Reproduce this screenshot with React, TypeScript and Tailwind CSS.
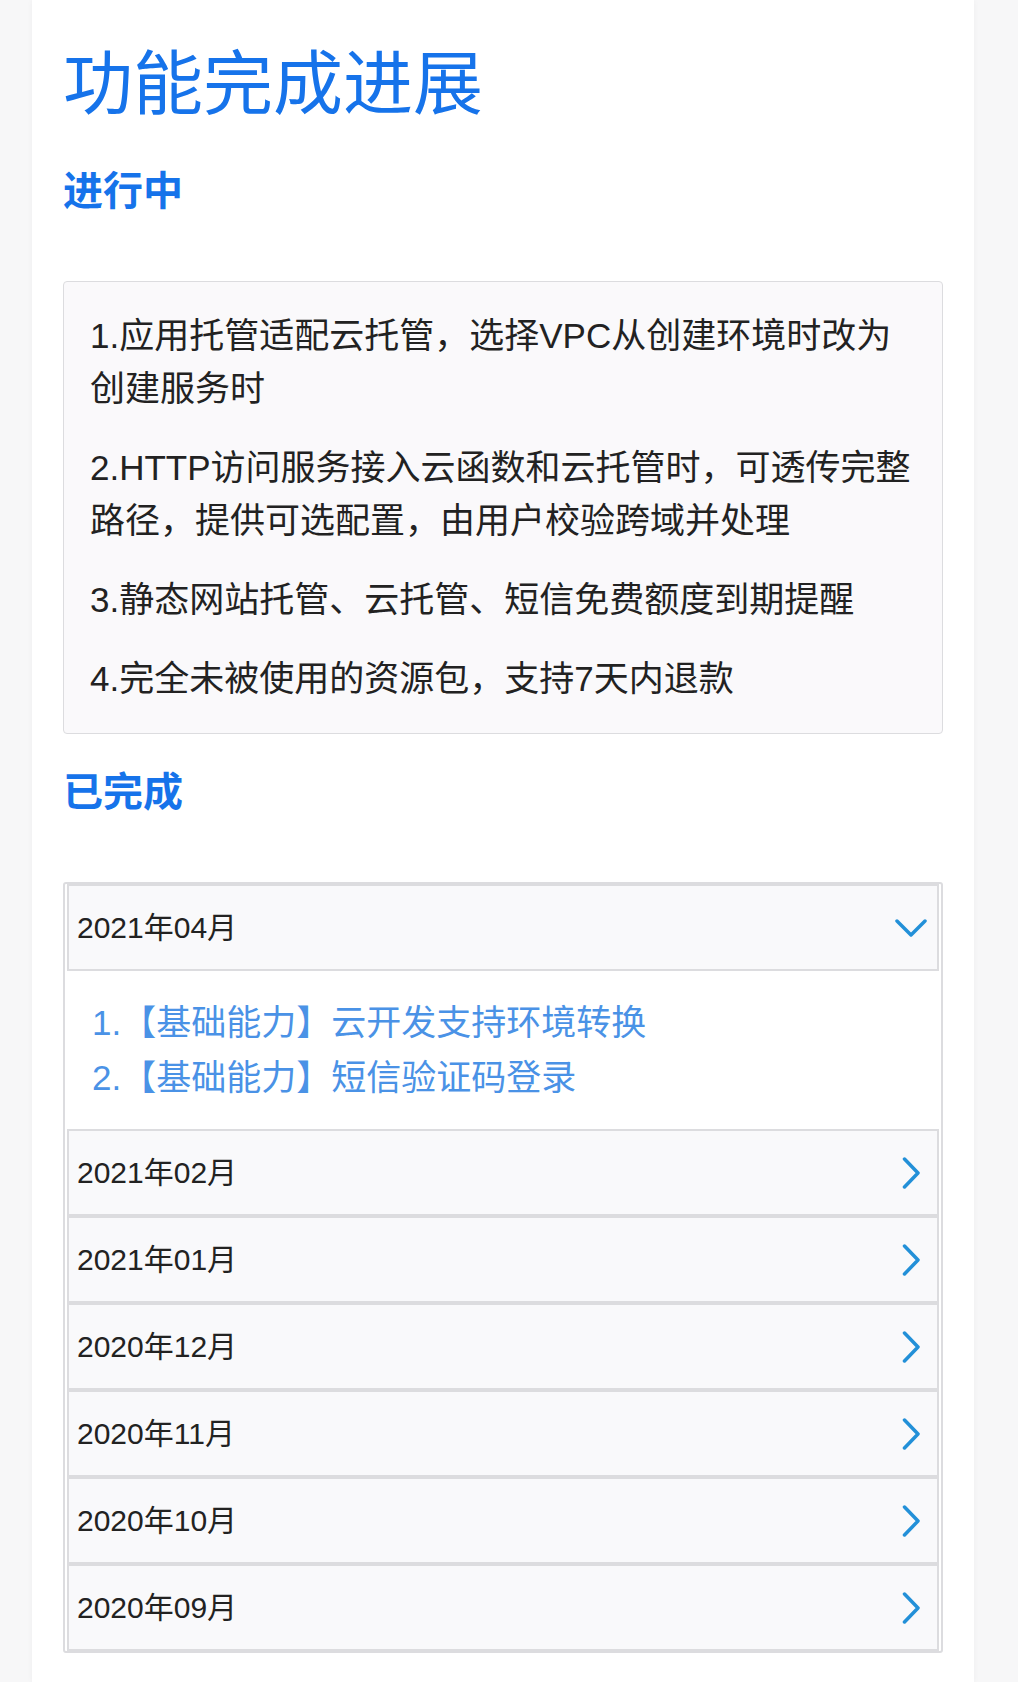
import { useState } from 'react'

const ongoing = [
  '1.应用托管适配云托管，选择VPC从创建环境时改为创建服务时',
  '2.HTTP访问服务接入云函数和云托管时，可透传完整路径，提供可选配置，由用户校验跨域并处理',
  '3.静态网站托管、云托管、短信免费额度到期提醒',
  '4.完全未被使用的资源包，支持7天内退款',
]

const months = [
  { label: '2021年04月', items: ['【基础能力】云开发支持环境转换', '【基础能力】短信验证码登录'] },
  { label: '2021年02月', items: [] },
  { label: '2021年01月', items: [] },
  { label: '2020年12月', items: [] },
  { label: '2020年11月', items: [] },
  { label: '2020年10月', items: [] },
  { label: '2020年09月', items: [] },
]

function Chevron({ open }: { open: boolean }) {
  return (
    <svg width="32" height="32" viewBox="0 0 32 32" fill="none" stroke="#2390d8" strokeWidth="3.5" strokeLinecap="round" strokeLinejoin="round">
      {open ? <path d="M2 9 L16 23 L30 9" /> : <path d="M9.5 2 L23 16 L9.5 30" />}
    </svg>
  )
}

export default function App() {
  const [open, setOpen] = useState(0)

  return (
    <div
      className="flex min-h-[1682px] bg-[#f7f7f8] pl-[32px] pr-[44px]"
      style={{ fontFamily: '"Liberation Sans", "Noto Sans CJK SC", sans-serif' }}
    >
      <main className="flex-1 bg-white px-[31px] pt-[43px] pb-[30px] shadow-[0_0_6px_rgba(0,0,0,0.04)]">
        <h1 className="text-[70px] leading-[84px] font-normal text-[#1673ea]">功能完成进展</h1>

        <h2 className="mt-[40px] text-[40px] leading-[48px] font-bold text-[#1673ea]">进行中</h2>

        <div className="mt-[66px] rounded-[4px] border border-[#dcdcdf] bg-[#faf9fb] px-[26px] pt-[27px] pb-[28px] text-[35px] leading-[53px] text-[#222]">
          <div className="flex flex-col gap-[26px]">
            {ongoing.map((t) => (
              <p key={t}>{t}</p>
            ))}
          </div>
        </div>

        <h2 className="mt-[34px] text-[40px] leading-[48px] font-bold text-[#1673ea]">已完成</h2>

        <div className="mt-[66px] rounded-[3px] border-2 border-[#dcdcdf] bg-white">
          {months.map((m, i) => (
            <div key={m.label}>
              <button
                onClick={() => setOpen(open === i ? -1 : i)}
                className="mx-[2px] flex h-[87px] w-[calc(100%-4px)] items-center justify-between border-2 border-[#dcdcdf] bg-[#f9f9fb] pl-[8px] pr-[10px] text-left text-[30px] text-[#222]"
              >
                <span>{m.label}</span>
                <Chevron open={open === i} />
              </button>
              {open === i && (
                <ol className="py-[24px] pl-[27px] text-[35px] leading-[55px] text-[#4a92e6]">
                  {m.items.map((it, j) => (
                    <li key={it}>
                      {j + 1}.{it}
                    </li>
                  ))}
                </ol>
              )}
            </div>
          ))}
        </div>
      </main>
    </div>
  )
}
